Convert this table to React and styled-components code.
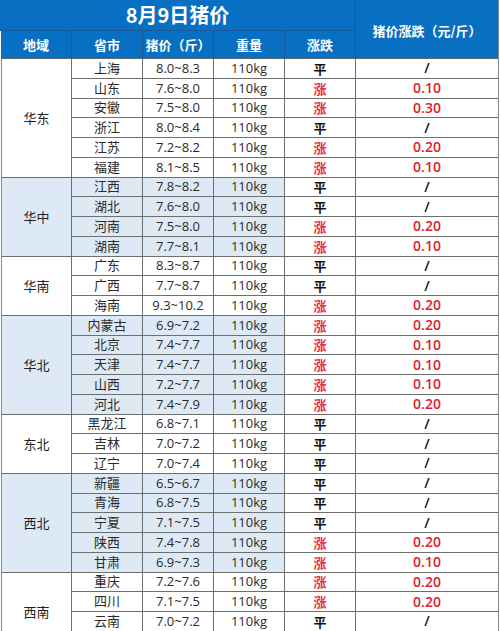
import React from "react";
import styled, { createGlobalStyle } from "styled-components";

const regions = [
  {
    name: "华东",
    rows: [
      ["上海", "8.0~8.3", "平", "/"],
      ["山东", "7.6~8.0", "涨", "0.10"],
      ["安徽", "7.5~8.0", "涨", "0.30"],
      ["浙江", "8.0~8.4", "平", "/"],
      ["江苏", "7.2~8.2", "涨", "0.20"],
      ["福建", "8.1~8.5", "涨", "0.10"],
    ],
  },
  {
    name: "华中",
    rows: [
      ["江西", "7.8~8.2", "平", "/"],
      ["湖北", "7.6~8.0", "平", "/"],
      ["河南", "7.5~8.0", "涨", "0.20"],
      ["湖南", "7.7~8.1", "涨", "0.10"],
    ],
  },
  {
    name: "华南",
    rows: [
      ["广东", "8.3~8.7", "平", "/"],
      ["广西", "7.7~8.7", "平", "/"],
      ["海南", "9.3~10.2", "涨", "0.20"],
    ],
  },
  {
    name: "华北",
    rows: [
      ["内蒙古", "6.9~7.2", "涨", "0.20"],
      ["北京", "7.4~7.7", "涨", "0.10"],
      ["天津", "7.4~7.7", "涨", "0.10"],
      ["山西", "7.2~7.7", "涨", "0.10"],
      ["河北", "7.4~7.9", "涨", "0.20"],
    ],
  },
  {
    name: "东北",
    rows: [
      ["黑龙江", "6.8~7.1", "平", "/"],
      ["吉林", "7.0~7.2", "平", "/"],
      ["辽宁", "7.0~7.4", "平", "/"],
    ],
  },
  {
    name: "西北",
    rows: [
      ["新疆", "6.5~6.7", "平", "/"],
      ["青海", "6.8~7.5", "平", "/"],
      ["宁夏", "7.1~7.5", "平", "/"],
      ["陕西", "7.4~7.8", "涨", "0.20"],
      ["甘肃", "6.9~7.3", "涨", "0.10"],
    ],
  },
  {
    name: "西南",
    rows: [
      ["重庆", "7.2~7.6", "涨", "0.20"],
      ["四川", "7.1~7.5", "涨", "0.20"],
      ["云南", "7.0~7.2", "平", "/"],
      ["贵州", "7.0~7.4", "平", "/"],
    ],
  },
];

const App = () => {
  return (
    <>
      <GlobalStyle />
      <Sheet>
        <TitleCell>8月9日猪价</TitleCell>
        <CornerCell>猪价涨跌（元/斤）</CornerCell>
        <HeaderCell>地域</HeaderCell>
        <HeaderCell>省市</HeaderCell>
        <HeaderCell>猪价（斤）</HeaderCell>
        <HeaderCell>重量</HeaderCell>
        <HeaderCell>涨跌</HeaderCell>

        {regions.map((region, i) => {
          const band = i % 2 === 1;
          return (
            <React.Fragment key={region.name}>
              <RegionCell $span={region.rows.length} $band={band}>
                {region.name}
              </RegionCell>
              {region.rows.map(([city, price, trend, change]) => (
                <React.Fragment key={city}>
                  <DataCell $band={band}>{city}</DataCell>
                  <DataCell $band={band}>{price}</DataCell>
                  <DataCell $band={band}>110kg</DataCell>
                  <TrendCell $up={trend === "涨"}>{trend}</TrendCell>
                  <ChangeCell $up={change !== "/"}>{change}</ChangeCell>
                </React.Fragment>
              ))}
            </React.Fragment>
          );
        })}
      </Sheet>
    </>
  );
};

export default App;

const GlobalStyle = createGlobalStyle`
  body {
    margin: 0;
    background: #fff;
    font-family: "Open Sans", "Noto Sans CJK SC", sans-serif;
  }
`;

const Sheet = styled.div`
  display: grid;
  grid-template-columns: 71px 71px 71px 71px 71px 142px;
  grid-template-rows: 31px 28px;
  grid-auto-rows: 19.75px;
  width: 497px;
  margin-left: 1px;
  border-right: 1px solid #8a8a8a;
`;

const Cell = styled.div`
  box-sizing: border-box;
  display: flex;
  align-items: center;
  justify-content: center;
  white-space: nowrap;
  font-size: 13px;
  line-height: 1;
`;

const TitleCell = styled(Cell)`
  grid-column: 1 / 6;
  background: #0870c2;
  color: #fff;
  font-size: 20px;
  font-weight: 700;
  font-family: "Noto Sans CJK SC", sans-serif;
  border-right: 1px solid #1b5a96;
  border-bottom: 1px solid #1b5a96;
  margin-left: -1px;
`;

const CornerCell = styled(Cell)`
  grid-column: 6;
  grid-row: 1 / 3;
  background: #0870c2;
  color: #fff;
  font-weight: 700;
  font-family: "Noto Sans CJK SC", sans-serif;
  border-bottom: 1px solid #5e6670;
  padding-top: 2px;
`;

const HeaderCell = styled(Cell)`
  background: #0870c2;
  color: #fff;
  font-weight: 700;
  font-family: "Noto Sans CJK SC", sans-serif;
  border-right: 1px solid #1b5a96;
  border-bottom: 1px solid #5e6670;
  &:first-of-type {
    margin-left: -1px;
  }
`;

const RegionCell = styled(Cell)`
  grid-column: 1;
  grid-row: span ${({ $span }) => $span};
  background: ${({ $band }) => ($band ? "#ddeaf6" : "#fff")};
  color: #222;
  font-family: "Noto Sans CJK SC", sans-serif;
  border-left: 1px solid #8a8a8a;
  border-right: 1px solid #6e6e6e;
  border-bottom: 1px solid #6e6e6e;
`;

const DataCell = styled(Cell)`
  background: ${({ $band }) => ($band ? "#ddeaf6" : "#fff")};
  color: #2a2a2a;
  border-right: 1px solid #6e6e6e;
  border-bottom: 1px solid #6e6e6e;
`;

const TrendCell = styled(Cell)`
  background: #fff;
  color: ${({ $up }) => ($up ? "#ec2a48" : "#111")};
  font-weight: 700;
  font-family: "Noto Sans CJK SC", sans-serif;
  border-right: 1px solid #6e6e6e;
  border-bottom: 1px solid #6e6e6e;
`;

const ChangeCell = styled(Cell)`
  background: #fff;
  color: ${({ $up }) => ($up ? "#e0202c" : "#111")};
  font-size: 14px;
  font-weight: 600;
  border-bottom: 1px solid #6e6e6e;
`;
